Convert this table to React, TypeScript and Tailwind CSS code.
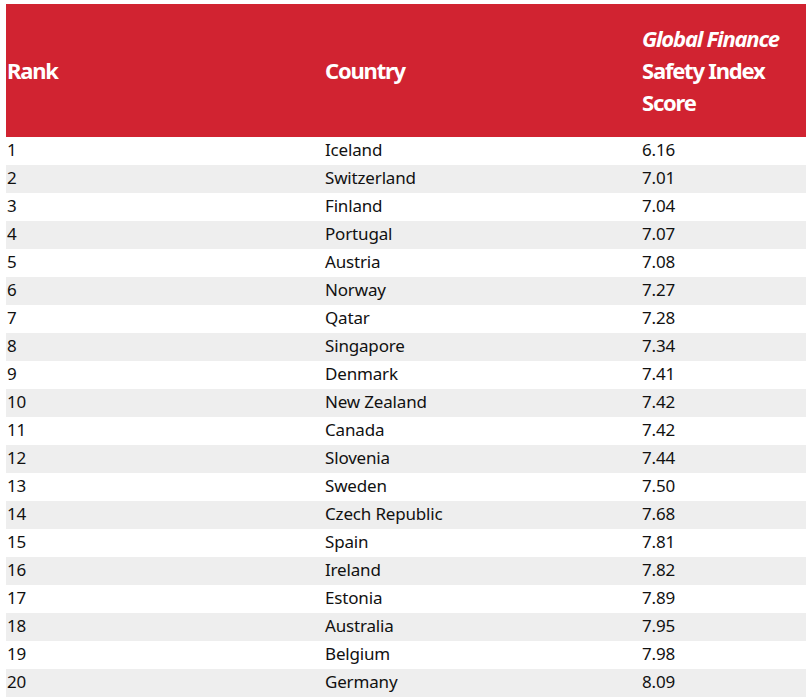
import React from "react";

const rows: [string, string][] = [
  ["Iceland", "6.16"],
  ["Switzerland", "7.01"],
  ["Finland", "7.04"],
  ["Portugal", "7.07"],
  ["Austria", "7.08"],
  ["Norway", "7.27"],
  ["Qatar", "7.28"],
  ["Singapore", "7.34"],
  ["Denmark", "7.41"],
  ["New Zealand", "7.42"],
  ["Canada", "7.42"],
  ["Slovenia", "7.44"],
  ["Sweden", "7.50"],
  ["Czech Republic", "7.68"],
  ["Spain", "7.81"],
  ["Ireland", "7.82"],
  ["Estonia", "7.89"],
  ["Australia", "7.95"],
  ["Belgium", "7.98"],
  ["Germany", "8.09"],
];

export default function App() {
  return (
    <div className="bg-white w-[810px] h-[700px] pt-[4px] pl-[6px]" style={{ fontFamily: '"Noto Sans", sans-serif' }}>
      <div className="w-[800px]">
        <div className="grid grid-cols-[319px_317px_164px] h-[133px] bg-[#d12331] text-white font-bold text-[22px] leading-[32px] tracking-[-0.055em] items-center pb-[2px]">
          <div className="pl-[1px]">Rank</div>
          <div>Country</div>
          <div>
            <div className="italic">Global Finance</div>
            <div>Safety Index</div>
            <div>Score</div>
          </div>
        </div>
        {rows.map(([c, s], i) => (
          <div
            key={i}
            className={`grid grid-cols-[319px_317px_164px] h-[28px] items-center text-[17px] tracking-[-0.01em] text-[#111] pb-[2px] ${i % 2 === 1 ? "bg-[#eeeeee]" : "bg-white"}`}
          >
            <div className="pl-[1px]">{i + 1}</div>
            <div>{c}</div>
            <div>{s}</div>
          </div>
        ))}
      </div>
    </div>
  );
}
